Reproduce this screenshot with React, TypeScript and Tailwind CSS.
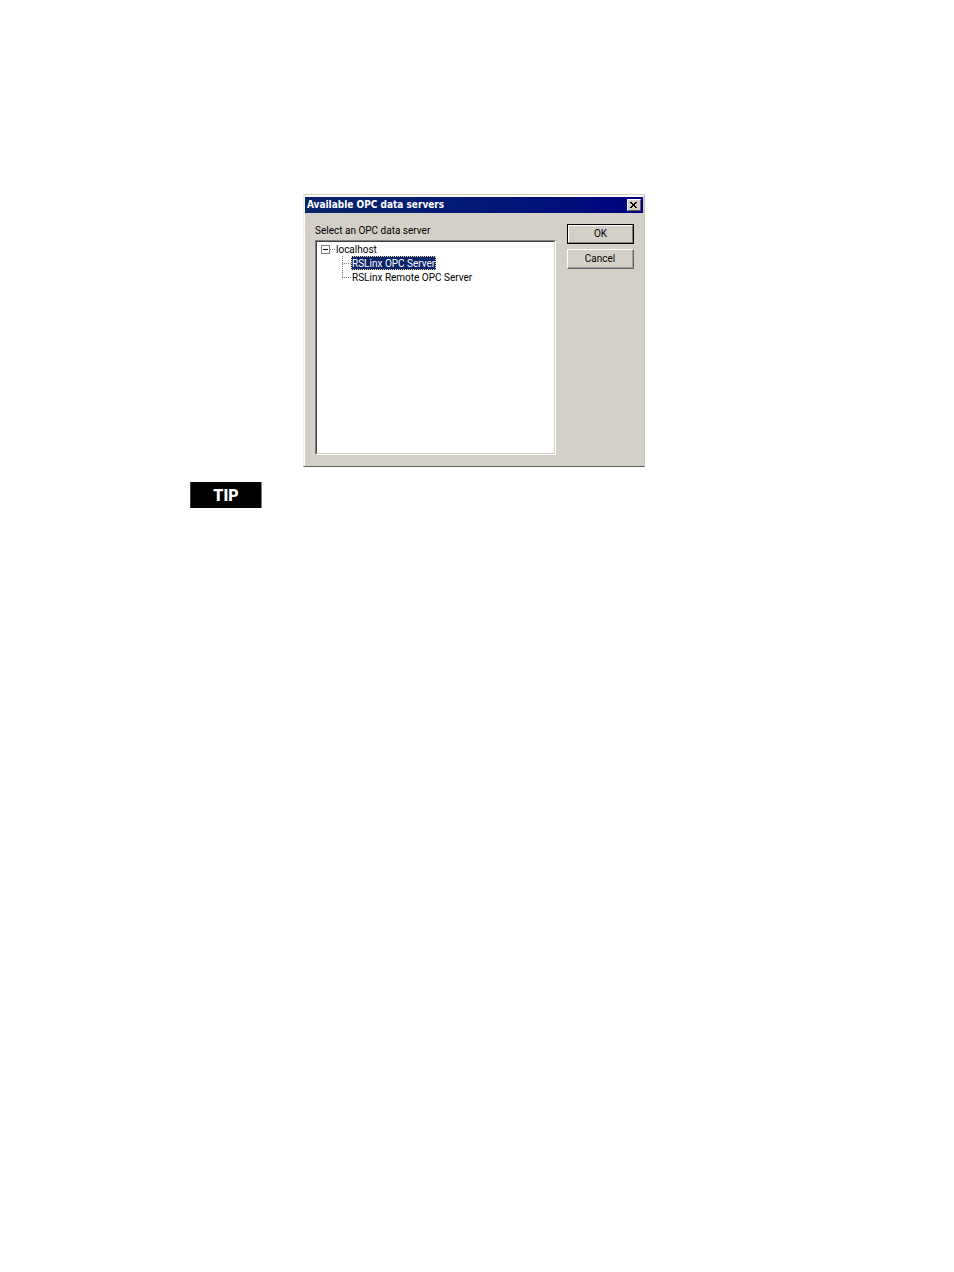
import { useState } from "react";

const servers = ["RSLinx OPC Server", "RSLinx Remote OPC Server"];

function Branch({ last }: { last: boolean }) {
  return (
    <svg width="9" height="14" viewBox="0 0 9 14" shapeRendering="crispEdges" aria-hidden="true" className="shrink-0">
      <path d={last ? "M.5 0V8" : "M.5 0V14"} stroke="#808080" strokeDasharray="1 1" />
      <path d="M0 7.5H9" stroke="#808080" strokeDasharray="1 1" />
    </svg>
  );
}

function ServerTree() {
  const [selected, setSelected] = useState(0);
  return (
    <div className="h-[215px] border border-t-[#808080] border-l-[#808080] border-r-white border-b-white">
      <div className="h-full border border-t-[#404040] border-l-[#404040] border-r-[#d4d0c8] border-b-[#d4d0c8] bg-white px-1 leading-[14px]">
        <button type="button" aria-label="Collapse localhost" className="flex h-[14px] items-center whitespace-nowrap">
          <svg width="14" height="14" viewBox="0 0 14 14" shapeRendering="crispEdges" aria-hidden="true">
            <rect x=".5" y="3.5" width="8" height="8" fill="#fff" stroke="#808080" />
            <path d="M2 7.5H7" stroke="#000" />
            <path d="M9 7.5H14" stroke="#808080" strokeDasharray="1 1" />
          </svg>
          <span className="pt-0.5 pl-px">localhost</span>
        </button>
        <ul className="pl-[21px]">
          {servers.map((name, i) => (
            <li key={name} className="flex h-[14px] items-center">
              <Branch last={i === servers.length - 1} />
              <button
                type="button"
                onClick={() => setSelected(i)}
                className={
                  i === selected
                    ? "h-[14px] whitespace-nowrap border border-dotted border-[#f5db95] bg-[#0a246a] pt-px leading-3 text-white"
                    : "h-[14px] whitespace-nowrap border border-transparent pt-px leading-3"
                }
              >
                {name}
              </button>
            </li>
          ))}
        </ul>
      </div>
    </div>
  );
}

export default function App() {
  return (
    <main className="min-h-screen bg-white pt-[194px] pl-[190px] font-['Roboto',Arial,sans-serif]">
      <section
        aria-labelledby="dialog-title"
        className="ml-[113px] w-[342px] border border-t-[#d4d0c8] border-l-[#ececea] border-r-[#c4c4c4] border-b-[#606060] bg-[#d4d0c8] text-[10px] text-black"
      >
        <div className="border-t-2 border-l border-r border-t-white border-l-white border-r-[#d4d0c8] pb-[11px]">
          <header className="flex h-4 items-center justify-between bg-linear-to-r from-[#0a246a] to-[#000080] pr-0.5 pl-0.5">
            <h1
              id="dialog-title"
              className="font-['DejaVu_Sans_Condensed','DejaVu_Sans',sans-serif] text-[10px] leading-4 font-bold whitespace-nowrap text-white"
            >
              Available OPC data servers
            </h1>
            <button
              type="button"
              aria-label="Close"
              className="flex h-3 w-[14px] items-center justify-center border border-t-white border-l-white border-r-[#606060] border-b-[#606060] bg-[#d4d0c8]"
            >
              <svg width="8" height="6" viewBox="0 0 8 6" shapeRendering="crispEdges" aria-hidden="true">
                <path
                  d="M0 0h2v1h-2zM5 0h2v1h-2zM1 1h2v1h-2zM4 1h2v1h-2zM2 2h3v2h-3zM1 4h2v1h-2zM4 4h2v1h-2zM0 5h2v1h-2zM5 5h2v1h-2z"
                  fill="#000"
                />
              </svg>
            </button>
          </header>
          <div className="flex gap-[11px] pt-2.5 pr-[9px] pl-2.5">
            <div className="min-w-0 flex-1">
              <h2 className="h-[17px] leading-4 whitespace-nowrap">Select an OPC data server</h2>
              <ServerTree />
            </div>
            <div className="flex w-[67px] flex-col gap-[5px] pt-px">
              <button type="button" className="h-5 border border-black">
                <span className="block h-full border border-t-white border-l-white border-r-[#808080] border-b-[#808080] leading-4">
                  OK
                </span>
              </button>
              <button type="button" className="h-5 border border-t-white border-l-white border-r-[#606060] border-b-[#606060]">
                <span className="block h-full border-r border-b border-[#a0a0a0] leading-[17px]">Cancel</span>
              </button>
            </div>
          </div>
        </div>
      </section>
      <aside className="mt-[15px] flex h-[26px] w-[72px] justify-center border-r border-l border-r-[#808080] border-l-[#404040] bg-black">
        <strong className="text-base leading-7 font-black text-white">TIP</strong>
      </aside>
    </main>
  );
}
